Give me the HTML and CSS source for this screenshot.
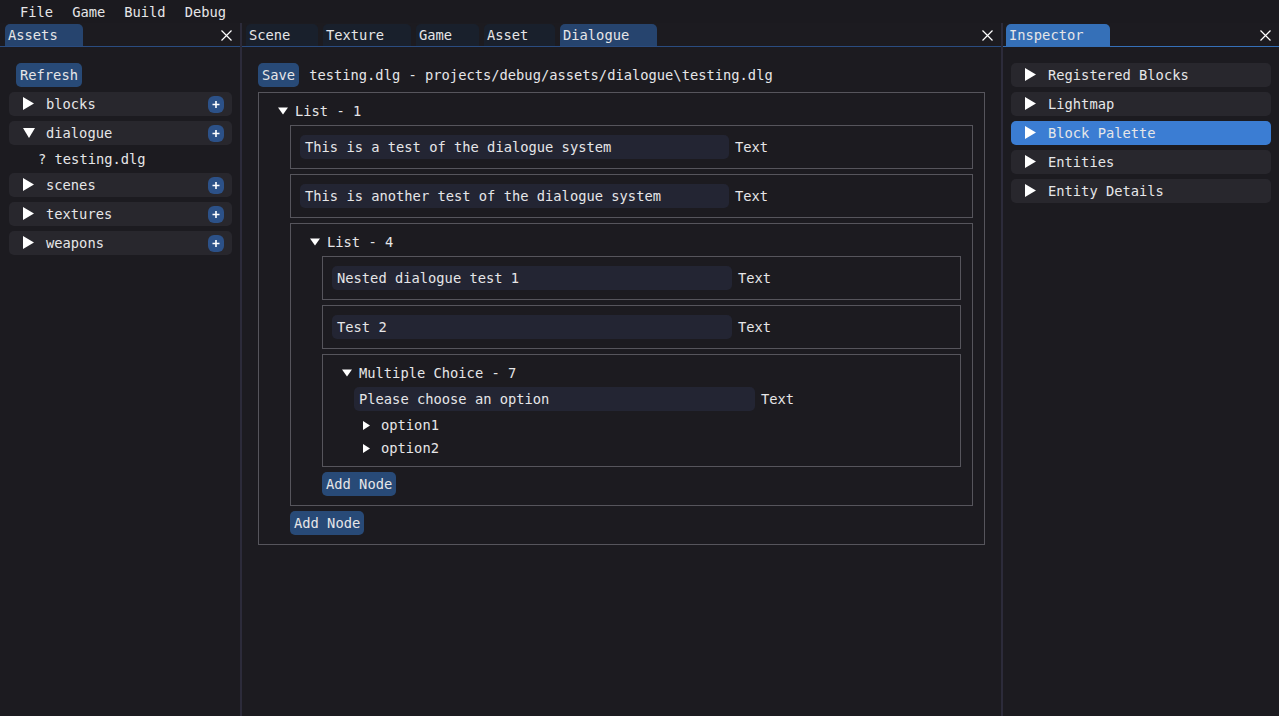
FILE: index.html
```html
<!DOCTYPE html>
<html>
<head>
<meta charset="utf-8">
<title>Editor</title>
<link rel="stylesheet" href="styles.css">
</head>
<body>
<div class="menubar"><span>File</span><span>Game</span><span>Build</span><span>Debug</span></div>
<div class="main">
  <section class="panel left">
    <div class="tabbar">
      <div class="tab active w-assets">Assets</div>
      <svg class="close" width="11" height="11" viewBox="0 0 11 11"><path d="M0.5 0.5L10.5 10.5M10.5 0.5L0.5 10.5" stroke="#fff" stroke-width="1.2"/></svg>
    </div>
    <div class="content left-content">
      <div class="btn refresh">Refresh</div>
      <div class="hdr"><svg class="tri" width="12" height="14" viewBox="0 0 12 14"><polygon points="0,0 11,6.5 0,13" fill="#fff"/></svg><span class="label">blocks</span><span class="plus"><svg width="16" height="17" viewBox="0 0 16 17"><path d="M8 5V12M4.5 8.5H11.5" stroke="#fff" stroke-width="1.6"/></svg></span></div>
      <div class="hdr"><svg class="tri" width="12" height="14" viewBox="0 0 12 14"><polygon points="0,2 12,2 6,12" fill="#fff"/></svg><span class="label">dialogue</span><span class="plus"><svg width="16" height="17" viewBox="0 0 16 17"><path d="M8 5V12M4.5 8.5H11.5" stroke="#fff" stroke-width="1.6"/></svg></span></div>
      <div class="file">? testing.dlg</div>
      <div class="hdr"><svg class="tri" width="12" height="14" viewBox="0 0 12 14"><polygon points="0,0 11,6.5 0,13" fill="#fff"/></svg><span class="label">scenes</span><span class="plus"><svg width="16" height="17" viewBox="0 0 16 17"><path d="M8 5V12M4.5 8.5H11.5" stroke="#fff" stroke-width="1.6"/></svg></span></div>
      <div class="hdr"><svg class="tri" width="12" height="14" viewBox="0 0 12 14"><polygon points="0,0 11,6.5 0,13" fill="#fff"/></svg><span class="label">textures</span><span class="plus"><svg width="16" height="17" viewBox="0 0 16 17"><path d="M8 5V12M4.5 8.5H11.5" stroke="#fff" stroke-width="1.6"/></svg></span></div>
      <div class="hdr"><svg class="tri" width="12" height="14" viewBox="0 0 12 14"><polygon points="0,0 11,6.5 0,13" fill="#fff"/></svg><span class="label">weapons</span><span class="plus"><svg width="16" height="17" viewBox="0 0 16 17"><path d="M8 5V12M4.5 8.5H11.5" stroke="#fff" stroke-width="1.6"/></svg></span></div>
    </div>
  </section>
  <div class="divider"></div>
  <section class="panel center">
    <div class="tabbar center-tabs">
      <div class="tab w-scene">Scene</div>
      <div class="tab w-texture">Texture</div>
      <div class="tab w-game">Game</div>
      <div class="tab w-asset">Asset</div>
      <div class="tab active w-dialogue">Dialogue</div>
      <svg class="close" width="11" height="11" viewBox="0 0 11 11"><path d="M0.5 0.5L10.5 10.5M10.5 0.5L0.5 10.5" stroke="#fff" stroke-width="1.2"/></svg>
    </div>
    <div class="content center-content">
      <div class="saverow"><div class="btn">Save</div><span>testing.dlg - projects/debug/assets/dialogue\testing.dlg</span></div>
      <div class="node">
        <div class="node-head"><svg class="dtri" width="10" height="8" viewBox="0 0 10 8"><polygon points="0,0.5 10,0.5 5,7.5" fill="#fff"/></svg><span>List - 1</span></div>
        <div class="leaf"><div class="input in-a">This is a test of the dialogue system</div><span class="lbl">Text</span></div>
        <div class="leaf"><div class="input in-a">This is another test of the dialogue system</div><span class="lbl">Text</span></div>
        <div class="node">
          <div class="node-head"><svg class="dtri" width="10" height="8" viewBox="0 0 10 8"><polygon points="0,0.5 10,0.5 5,7.5" fill="#fff"/></svg><span>List - 4</span></div>
          <div class="leaf"><div class="input in-b">Nested dialogue test 1</div><span class="lbl">Text</span></div>
          <div class="leaf"><div class="input in-b">Test 2</div><span class="lbl">Text</span></div>
          <div class="node">
            <div class="node-head"><svg class="dtri" width="10" height="8" viewBox="0 0 10 8"><polygon points="0,0.5 10,0.5 5,7.5" fill="#fff"/></svg><span>Multiple Choice - 7</span></div>
            <div class="row"><div class="input in-c">Please choose an option</div><span class="lbl">Text</span></div>
            <div class="opt"><svg class="otri" width="8" height="9" viewBox="0 0 8 9"><polygon points="0,0 7,4.5 0,9" fill="#fff"/></svg><span>option1</span></div>
            <div class="opt"><svg class="otri" width="8" height="9" viewBox="0 0 8 9"><polygon points="0,0 7,4.5 0,9" fill="#fff"/></svg><span>option2</span></div>
          </div>
          <div class="btn addnode">Add Node</div>
        </div>
        <div class="btn addnode">Add Node</div>
      </div>
    </div>
  </section>
  <div class="divider"></div>
  <section class="panel right">
    <div class="tabbar right-tabs">
      <div class="tab focus w-inspector">Inspector</div>
      <svg class="close" width="11" height="11" viewBox="0 0 11 11"><path d="M0.5 0.5L10.5 10.5M10.5 0.5L0.5 10.5" stroke="#fff" stroke-width="1.2"/></svg>
    </div>
    <div class="content right-content">
      <div class="hdr"><svg class="tri" width="12" height="14" viewBox="0 0 12 14"><polygon points="0,0 11,6.5 0,13" fill="#fff"/></svg><span class="label">Registered Blocks</span></div>
      <div class="hdr"><svg class="tri" width="12" height="14" viewBox="0 0 12 14"><polygon points="0,0 11,6.5 0,13" fill="#fff"/></svg><span class="label">Lightmap</span></div>
      <div class="hdr sel"><svg class="tri" width="12" height="14" viewBox="0 0 12 14"><polygon points="0,0 11,6.5 0,13" fill="#fff"/></svg><span class="label">Block Palette</span></div>
      <div class="hdr"><svg class="tri" width="12" height="14" viewBox="0 0 12 14"><polygon points="0,0 11,6.5 0,13" fill="#fff"/></svg><span class="label">Entities</span></div>
      <div class="hdr"><svg class="tri" width="12" height="14" viewBox="0 0 12 14"><polygon points="0,0 11,6.5 0,13" fill="#fff"/></svg><span class="label">Entity Details</span></div>
    </div>
  </section>
</div>
</body>
</html>
```

FILE: styles.css
```css
* { box-sizing: border-box; }
html, body { margin: 0; padding: 0; }
body {
  width: 1279px;
  height: 716px;
  overflow: hidden;
  background: #1c1b20;
  color: #e6e6e8;
  font-family: "DejaVu Sans Mono", "Liberation Mono", monospace;
  font-size: 13.76px;
  line-height: 18px;
}
.menubar {
  height: 23px;
  display: flex;
  align-items: center;
  gap: 19px;
  padding-left: 20px;
  background: #1b1a1f;
}
.main { display: flex; height: 693px; }
.panel { display: flex; flex-direction: column; }
.left { width: 240px; }
.center { width: 759px; }
.right { width: 276px; }
.divider { width: 2px; background: #2c2b3a; }

.tabbar {
  height: 24px;
  padding-top: 1px;
  border-bottom: 1px solid #2a4c80;
  display: flex;
  align-items: flex-end;
  gap: 5px;
  padding-left: 5px;
}
.center-tabs { padding-left: 4px; }
.right-tabs { padding-left: 3px; border-bottom-color: #3570b8; }
.tab {
  height: 22px;
  line-height: 22px;
  padding-left: 3px;
  border-radius: 5px 5px 0 0;
  background: #19202c;
  white-space: nowrap;
}
.tab.active { background: #26446e; }
.tab.focus { background: #3570b8; }
.w-assets { width: 78px; }
.w-scene { width: 72px; }
.w-texture { width: 88px; }
.w-game { width: 63px; }
.w-asset { width: 71px; }
.w-dialogue { width: 97px; }
.w-inspector { width: 104px; }
.close { margin-left: auto; margin-right: 8px; align-self: center; }

.content { display: flex; flex-direction: column; gap: 5px; }
.left-content { padding: 16px 8px 0 9px; }
.right-content { padding: 16px 8px 0 8px; }
.center-content { padding: 16px 16px 0 16px; }

.btn {
  height: 24px;
  line-height: 24px;
  padding: 0 4px;
  background: #284a77;
  border-radius: 5px;
  align-self: flex-start;
  white-space: nowrap;
}
.refresh { margin-left: 7px; }

.hdr {
  height: 24px;
  background: #28272d;
  border-radius: 5px;
  display: flex;
  align-items: center;
}
.hdr.sel { background: #3b7dd3; }
.hdr .tri { margin-left: 14px; flex: none; }
.hdr .label { margin-left: 11px; }
.plus {
  margin-left: auto;
  margin-right: 8px;
  width: 16px;
  height: 17px;
  border-radius: 6px;
  background: #2c5188;
  display: flex;
}
.file { height: 18px; padding-left: 29px; }

.saverow { display: flex; align-items: center; gap: 10px; }

.node {
  border: 1px solid #56555c;
  padding: 9px 11px 9px 31px;
  display: flex;
  flex-direction: column;
  gap: 5px;
}
.node-head {
  height: 18px;
  display: flex;
  align-items: center;
  margin-left: -12px;
  gap: 7px;
}
.leaf {
  border: 1px solid #56555c;
  padding: 9px 9px;
  display: flex;
  align-items: center;
}
.row { display: flex; align-items: center; }
.input {
  height: 24px;
  line-height: 24px;
  padding-left: 5px;
  background: #232533;
  border-radius: 5px;
  white-space: nowrap;
  flex: none;
}
.in-a { width: 429px; }
.in-b { width: 400px; }
.in-c { width: 401px; }
.lbl { margin-left: 6px; }
.opt {
  height: 18px;
  display: flex;
  align-items: center;
  padding-left: 9px;
  gap: 10px;
}
.addnode { margin-left: 0; }
```
